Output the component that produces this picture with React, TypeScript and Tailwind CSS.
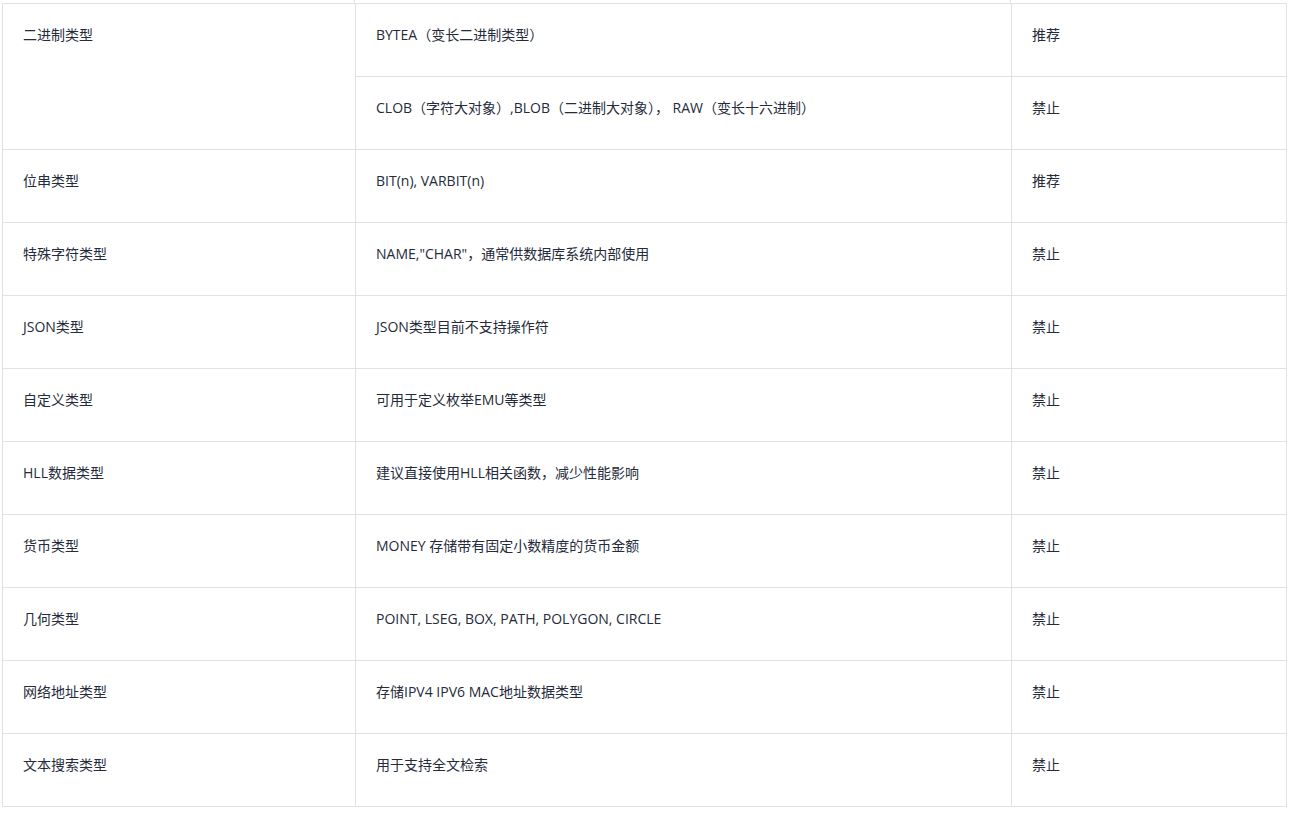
const rows: { type: string; items: { desc: string; level: string }[] }[] = [
  {
    type: "二进制类型",
    items: [
      { desc: "BYTEA（变长二进制类型）", level: "推荐" },
      { desc: "CLOB（字符大对象）,BLOB（二进制大对象）， RAW（变长十六进制）", level: "禁止" },
    ],
  },
  { type: "位串类型", items: [{ desc: "BIT(n), VARBIT(n)", level: "推荐" }] },
  { type: "特殊字符类型", items: [{ desc: "NAME,\"CHAR\"，通常供数据库系统内部使用", level: "禁止" }] },
  { type: "JSON类型", items: [{ desc: "JSON类型目前不支持操作符", level: "禁止" }] },
  { type: "自定义类型", items: [{ desc: "可用于定义枚举EMU等类型", level: "禁止" }] },
  { type: "HLL数据类型", items: [{ desc: "建议直接使用HLL相关函数，减少性能影响", level: "禁止" }] },
  { type: "货币类型", items: [{ desc: "MONEY 存储带有固定小数精度的货币金额", level: "禁止" }] },
  { type: "几何类型", items: [{ desc: "POINT, LSEG, BOX, PATH, POLYGON, CIRCLE", level: "禁止" }] },
  { type: "网络地址类型", items: [{ desc: "存储IPV4 IPV6 MAC地址数据类型", level: "禁止" }] },
  { type: "文本搜索类型", items: [{ desc: "用于支持全文检索", level: "禁止" }] },
];

const cell = "h-[73px] border border-[#dfe1e6] px-5 pt-[20px] pb-0 align-top";

export default function App() {
  return (
    <div
      className="min-h-screen bg-white pl-[2px] text-[14px] leading-[22px] text-[#252b3a]"
      style={{ fontFamily: '"Open Sans", "Noto Sans CJK SC", sans-serif' }}
    >
      {/* tail of the previous row, cut off by the viewport */}
      <div className="flex h-[3px] w-[1285px]">
        <div className="w-[353px] border-r border-[#dfe1e6]" />
        <div className="w-[656px] border-r border-[#dfe1e6]" />
      </div>
      <table className="w-[1285px] table-fixed border-collapse">
        <colgroup>
          <col className="w-[353px]" />
          <col className="w-[656px]" />
          <col />
        </colgroup>
        <tbody>
          {rows.flatMap((row) =>
            row.items.map((item, i) => (
              <tr key={row.type + i}>
                {i === 0 && (
                  <td rowSpan={row.items.length} className={cell}>
                    {row.type}
                  </td>
                )}
                <td className={cell}>{item.desc}</td>
                <td className={cell}>{item.level}</td>
              </tr>
            ))
          )}
        </tbody>
      </table>
    </div>
  );
}
